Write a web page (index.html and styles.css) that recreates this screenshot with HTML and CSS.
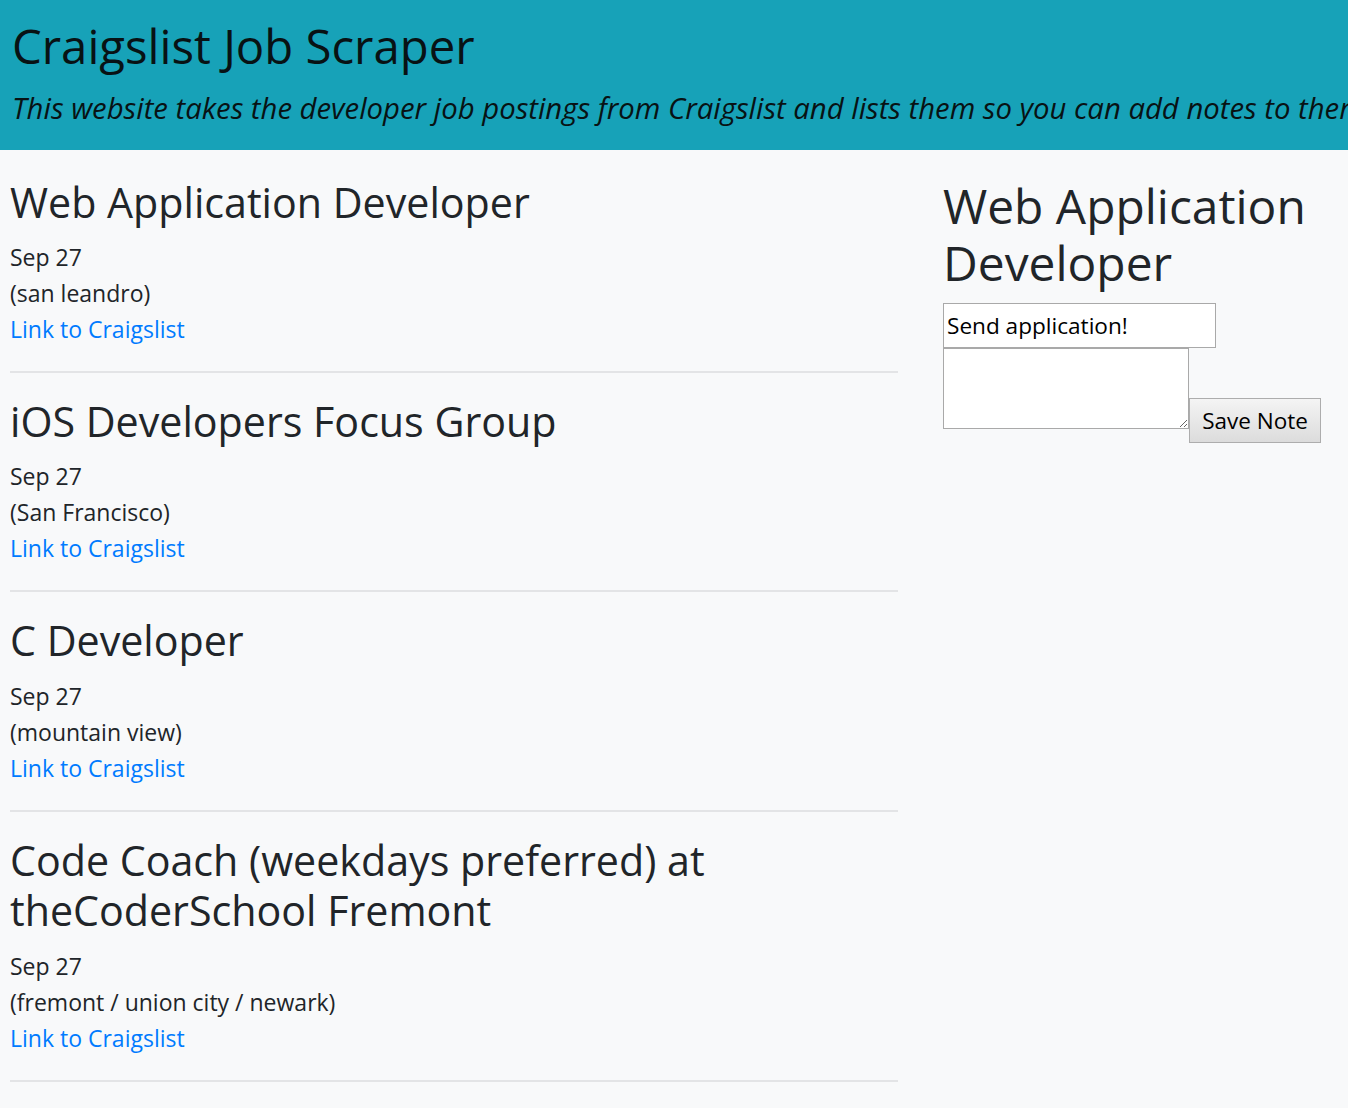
FILE: index.html
```html
<!DOCTYPE html>
<html lang="en">
<head>
<meta charset="utf-8">
<title>Craigslist Job Scraper</title>
<link rel="stylesheet" href="styles.css">
</head>
<body>
<header class="banner">
  <h1 class="banner-title">Craigslist Job Scraper</h1>
  <p class="banner-lead">This website takes the developer job postings from Craigslist and lists them so you can add notes to them.</p>
</header>
<main class="layout">
  <section class="jobs">
    <article class="job">
      <h3 class="job-title">Web Application Developer</h3>
      <div class="job-meta">
        <div>Sep 27</div>
        <div>(san leandro)</div>
        <a class="job-link" href="#">Link to Craigslist</a>
      </div>
      <hr class="job-rule">
    </article>
    <article class="job">
      <h3 class="job-title">iOS Developers Focus Group</h3>
      <div class="job-meta">
        <div>Sep 27</div>
        <div>(San Francisco)</div>
        <a class="job-link" href="#">Link to Craigslist</a>
      </div>
      <hr class="job-rule">
    </article>
    <article class="job">
      <h3 class="job-title">C Developer</h3>
      <div class="job-meta">
        <div>Sep 27</div>
        <div>(mountain view)</div>
        <a class="job-link" href="#">Link to Craigslist</a>
      </div>
      <hr class="job-rule">
    </article>
    <article class="job">
      <h3 class="job-title">Code Coach (weekdays preferred) at theCoderSchool Fremont</h3>
      <div class="job-meta">
        <div>Sep 27</div>
        <div>(fremont / union city / newark)</div>
        <a class="job-link" href="#">Link to Craigslist</a>
      </div>
      <hr class="job-rule">
    </article>
  </section>
  <aside class="notes">
    <h2 class="notes-title">Web Application Developer</h2>
    <form class="note-form">
      <input class="note-input" type="text" value="Send application!">
      <div class="note-row"><textarea class="note-body"></textarea><button class="note-save" type="button">Save Note</button></div>
    </form>
  </aside>
</main>
</body>
</html>
```

FILE: styles.css
```css
html, body {
  margin: 0;
  padding: 0;
}

body {
  background: #f8f9fa;
  color: #212529;
  font-family: "Open Sans", "Noto Sans", sans-serif;
  font-size: 23px;
  line-height: 36px;
  overflow-x: hidden;
}

.banner {
  background: #17a2b8;
  color: #081214;
  padding: 17px 12px 20px;
  overflow: hidden;
}

.banner-title {
  margin: 0 0 12px;
  font-size: 47.3px;
  font-weight: 400;
  line-height: 57.6px;
}

.banner-lead {
  margin: 0;
  font-size: 29.3px;
  font-style: italic;
  line-height: 43px;
  white-space: nowrap;
}

.layout {
  display: grid;
  grid-template-columns: 888px 405px;
  column-gap: 45px;
  padding: 27px 0 0 10px;
}

.job-title {
  margin: 0 0 12px;
  font-size: 41.2px;
  font-weight: 500;
  line-height: 50.4px;
}

.job-meta {
  font-size: 23px;
  line-height: 36px;
}

.job-link {
  color: #007bff;
  text-decoration: none;
}

.job-rule {
  margin: 24px 0 23px;
  border: 0;
  border-top: 2px solid #e3e4e6;
  height: 0;
}

.notes-title {
  margin: 0 0 11px;
  font-size: 47.9px;
  font-weight: 500;
  line-height: 57.6px;
}

.note-form {
  margin: 0;
}

.note-input {
  display: block;
  box-sizing: border-box;
  width: 273px;
  height: 45px;
  margin: 0;
  padding: 1px 3px;
  border: 1px solid #a9a9a9;
  background: #fff;
  color: #000;
  font-family: "Open Sans", "Noto Sans", sans-serif;
  font-size: 22.6px;
}

.note-row {
  line-height: normal;
}

.note-body {
  box-sizing: border-box;
  width: 246px;
  height: 81px;
  margin: 0;
  padding: 2px;
  border: 1px solid #a9a9a9;
  background: #fff;
  font-family: "Open Sans", "Noto Sans", sans-serif;
  font-size: 22px;
  vertical-align: baseline;
}

.note-save {
  box-sizing: border-box;
  width: 132px;
  height: 45px;
  margin: 0;
  padding: 0 10px;
  border: 1px solid #adadad;
  border-radius: 0;
  background: linear-gradient(#f4f4f4, #dcdcdc);
  color: #000;
  font-family: "Open Sans", "Noto Sans", sans-serif;
  font-size: 22.5px;
  vertical-align: baseline;
}
```
